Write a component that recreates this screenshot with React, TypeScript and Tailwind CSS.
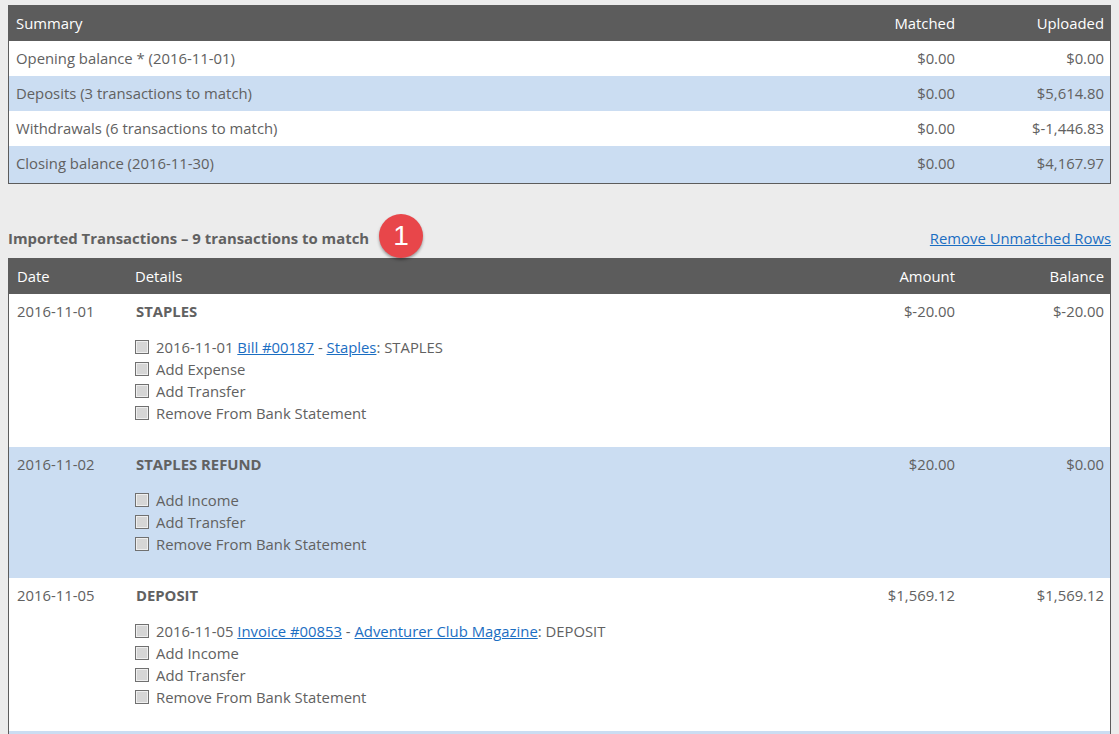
// App.tsx: bank statement matching view
const SUMMARY = [
  { label: 'Opening balance * (2016-11-01)', matched: '$0.00', uploaded: '$0.00' },
  { label: 'Deposits (3 transactions to match)', matched: '$0.00', uploaded: '$5,614.80' },
  { label: 'Withdrawals (6 transactions to match)', matched: '$0.00', uploaded: '$-1,446.83' },
  { label: 'Closing balance (2016-11-30)', matched: '$0.00', uploaded: '$4,167.97' },
];

function Check() {
  return (
    <span className="-ml-px h-[14px] w-[14px] shrink-0 border border-[#707070] bg-[#d6d6d6] shadow-[inset_0_0_0_1px_#efefef]" />
  );
}

function A({ children }: { children: string }) {
  return <a className="text-[#1b6ec2] underline" href="#">{children}</a>;
}

function Option({ children }: { children: React.ReactNode }) {
  return (
    <div className="flex h-[22px] items-center gap-[7px]">
      <Check />
      <span>{children}</span>
    </div>
  );
}

interface TxProps {
  date: string;
  title: string;
  amount: string;
  balance: string;
  height: string;
  striped?: boolean;
  children: React.ReactNode;
}

function Tx({ date, title, amount, balance, height, striped, children }: TxProps) {
  return (
    <div className={`flex pt-[8px] pr-[6px] pl-[8px] ${height} ${striped ? 'bg-[#cbddf2]' : 'bg-white'}`}>
      <div className="w-[119px] shrink-0 leading-[19px]">{date}</div>
      <div className="min-w-0 flex-1">
        <div className="font-bold leading-[19px]">{title}</div>
        <div className="mt-[15px]">{children}</div>
      </div>
      <div className="w-[120px] shrink-0 text-right leading-[19px]">{amount}</div>
      <div className="w-[149px] shrink-0 text-right leading-[19px]">{balance}</div>
    </div>
  );
}

export default function App() {
  return (
    <div className="h-[734px] overflow-hidden bg-[#ececec] pt-[5px] pr-[8px] pl-[8px] font-['Open_Sans',sans-serif] text-[14.85px] text-[#616161]">
      <section className="border border-[#5c5c5c]">
        <div className="flex h-[35px] items-center bg-[#5c5c5c] pr-[6px] pl-[7px] text-white">
          <div className="flex-1">Summary</div>
          <div className="w-[120px] text-right">Matched</div>
          <div className="w-[149px] text-right">Uploaded</div>
        </div>
        {SUMMARY.map((row, i) => (
          <div
            key={row.label}
            className={`flex items-center pr-[6px] pl-[7px] ${i % 2 ? 'bg-[#cbddf2]' : 'bg-white'} ${i === 3 ? 'h-[37px] pb-[2px]' : 'h-[35px]'}`}
          >
            <div className="flex-1">{row.label}</div>
            <div className="w-[120px] text-right">{row.matched}</div>
            <div className="w-[149px] text-right">{row.uploaded}</div>
          </div>
        ))}
      </section>

      <div className="relative mt-[42px] flex h-[32px] items-center justify-between pb-[8px]">
        <h2 className="text-[14.9px] font-bold">Imported Transactions – 9 transactions to match</h2>
        <a className="text-[#1b6ec2] underline" href="#">Remove Unmatched Rows</a>
        <span className="absolute top-[-12px] left-[371px] flex h-[44px] w-[44px] items-center justify-center rounded-full bg-[#e8464a] font-['Liberation_Sans',sans-serif] text-[28px] text-white shadow-[0_2px_3px_rgba(0,0,0,0.35)]">
          1
        </span>
      </div>

      <section className="border-x border-[#5c5c5c]">
        <div className="flex h-[36px] items-center bg-[#5c5c5c] pr-[6px] pl-[8px] text-white">
          <div className="w-[118px]">Date</div>
          <div className="flex-1">Details</div>
          <div className="w-[120px] text-right">Amount</div>
          <div className="w-[149px] text-right">Balance</div>
        </div>

        <Tx date="2016-11-01" title="STAPLES" amount="$-20.00" balance="$-20.00" height="h-[153px]">
          <Option>2016-11-01 <A>Bill #00187</A> - <A>Staples</A>: STAPLES</Option>
          <Option>Add Expense</Option>
          <Option>Add Transfer</Option>
          <Option>Remove From Bank Statement</Option>
        </Tx>
        <Tx date="2016-11-02" title="STAPLES REFUND" amount="$20.00" balance="$0.00" height="h-[131px]" striped>
          <Option>Add Income</Option>
          <Option>Add Transfer</Option>
          <Option>Remove From Bank Statement</Option>
        </Tx>
        <Tx date="2016-11-05" title="DEPOSIT" amount="$1,569.12" balance="$1,569.12" height="h-[153px]">
          <Option>2016-11-05 <A>Invoice #00853</A> - <A>Adventurer Club Magazine</A>: DEPOSIT</Option>
          <Option>Add Income</Option>
          <Option>Add Transfer</Option>
          <Option>Remove From Bank Statement</Option>
        </Tx>
        <div className="h-[20px] bg-[#cbddf2]" />
      </section>
    </div>
  );
}
